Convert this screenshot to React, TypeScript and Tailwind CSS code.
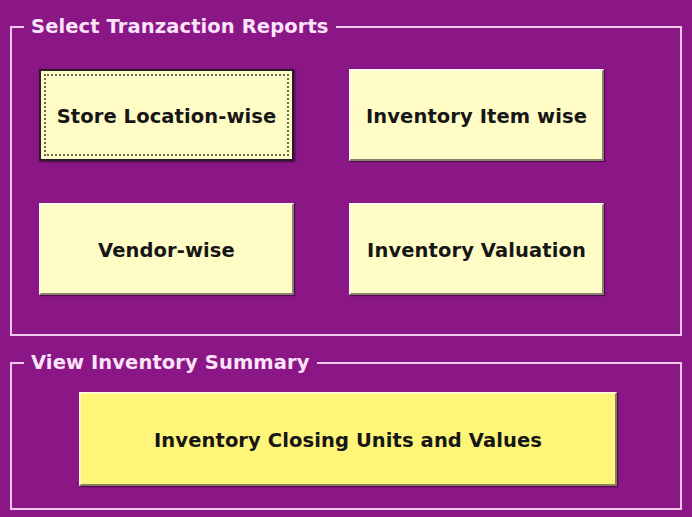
const font = "font-['DejaVu_Sans',sans-serif]";

function ReportButton({ label, focused = false }: { label: string; focused?: boolean }) {
  return (
    <button
      type="button"
      className={
        focused
          ? "h-[92px] w-[255px] border-2 border-[#2b1a2b] bg-[#fffcc6] p-[3px] shadow-[1px_1px_2px_rgba(0,0,0,0.5)]"
          : "h-[92px] w-[255px] border-2 border-t-[#fffbe8] border-l-[#fffbe8] border-b-[#8a8070] border-r-[#8a8070] bg-[#fffcc6] shadow-[1px_1px_1px_rgba(40,0,40,0.6)]"
      }
    >
      <div
        className={
          focused
            ? "flex h-full w-full items-center justify-center border-2 border-dotted border-[#6b6b5a] pt-[3px]"
            : "flex h-full w-full items-center justify-center pt-[3px]"
        }
      >
        <span className="text-[19.5px] font-bold tracking-[0.1px] text-[#161616]">{label}</span>
      </div>
    </button>
  );
}

export default function App() {
  return (
    <div className={`h-[517px] w-[692px] overflow-hidden bg-[#8b1686] pt-[16px] pl-[10px] ${font}`}>
      <fieldset className="w-[672px] border-2 border-[#f0c8ee] pb-[39px]">
        <legend className="ml-[12px] px-[7px] text-[19.5px] font-bold leading-[22px] tracking-[0.1px] text-[#fbe4fa]">
          Select Tranzaction Reports
        </legend>
        <div className="grid grid-cols-[255px_255px] gap-x-[55px] gap-y-[42px] pt-[31px] pl-[27px]">
          <ReportButton label="Store Location-wise" focused />
          <ReportButton label="Inventory Item wise" />
          <ReportButton label="Vendor-wise" />
          <ReportButton label="Inventory Valuation" />
        </div>
      </fieldset>

      <fieldset className="mt-[16px] w-[672px] border-2 border-[#f0c8ee] pb-[22px]">
        <legend className="ml-[12px] px-[7px] text-[19.5px] font-bold leading-[22px] tracking-[0.1px] text-[#fbe4fa]">
          View Inventory Summary
        </legend>
        <div className="pt-[18px] pl-[67px]">
          <button
            type="button"
            className="flex h-[94px] w-[538px] items-center justify-center border-2 border-t-[#fffbd0] border-l-[#fffbd0] border-b-[#8a8060] border-r-[#8a8060] bg-[#fff578] pt-[3px] shadow-[1px_1px_1px_rgba(40,0,40,0.6)]"
          >
            <span className="text-[19.5px] font-bold tracking-[0.1px] text-[#161616]">
              Inventory Closing Units and Values
            </span>
          </button>
        </div>
      </fieldset>
    </div>
  );
}
